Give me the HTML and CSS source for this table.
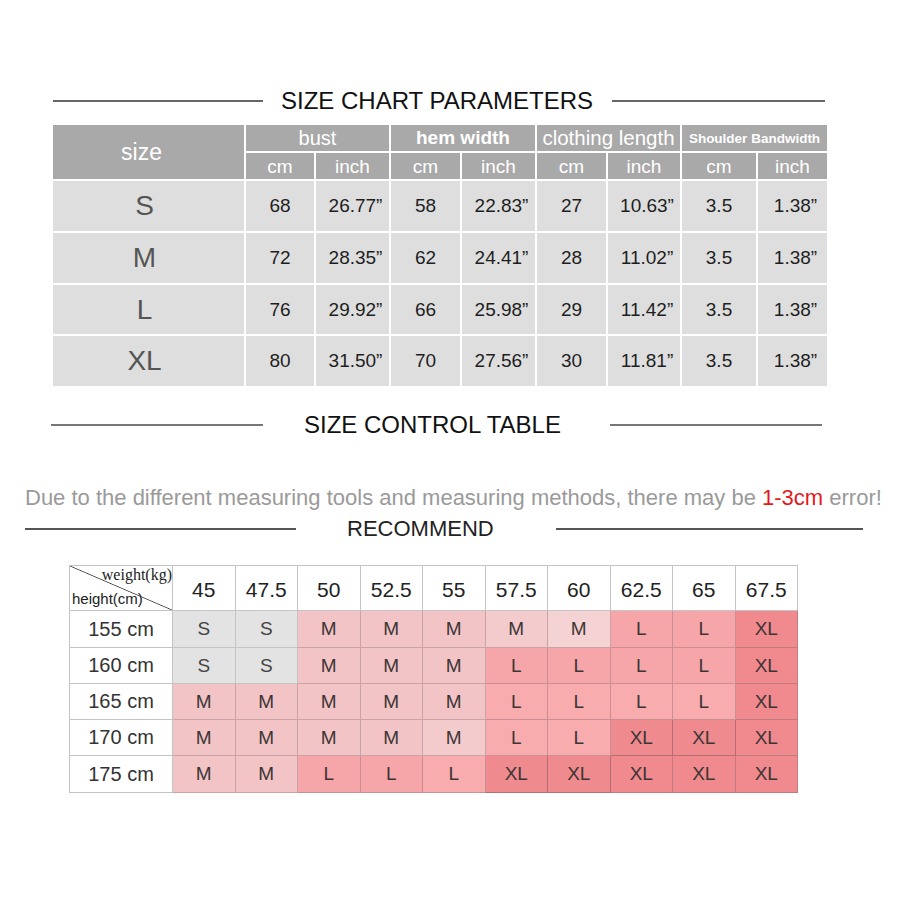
FILE: index.html
```html
<!DOCTYPE html>
<html>
<head>
<meta charset="utf-8">
<link rel="stylesheet" href="styles.css">
</head>
<body>
<div class="page">
  <div class="title t1">
    <span class="rule r1a"></span>
    <h1 class="title-text">SIZE CHART PARAMETERS</h1>
    <span class="rule r1b"></span>
  </div>

  <div class="chart">
    <div class="hd size-hd">size</div>
    <div class="hd grp">bust</div>
    <div class="hd grp bold">hem width</div>
    <div class="hd grp big">clothing length</div>
    <div class="hd grp small">Shoulder Bandwidth</div>
    <div class="hd unit">cm</div><div class="hd unit">inch</div>
    <div class="hd unit">cm</div><div class="hd unit">inch</div>
    <div class="hd unit">cm</div><div class="hd unit">inch</div>
    <div class="hd unit">cm</div><div class="hd unit">inch</div>

    <div class="bd sz">S</div><div class="bd">68</div><div class="bd in">26.77”</div><div class="bd">58</div><div class="bd in">22.83”</div><div class="bd">27</div><div class="bd in">10.63”</div><div class="bd">3.5</div><div class="bd in">1.38”</div>
    <div class="bd sz">M</div><div class="bd">72</div><div class="bd in">28.35”</div><div class="bd">62</div><div class="bd in">24.41”</div><div class="bd">28</div><div class="bd in">11.02”</div><div class="bd">3.5</div><div class="bd in">1.38”</div>
    <div class="bd sz">L</div><div class="bd">76</div><div class="bd in">29.92”</div><div class="bd">66</div><div class="bd in">25.98”</div><div class="bd">29</div><div class="bd in">11.42”</div><div class="bd">3.5</div><div class="bd in">1.38”</div>
    <div class="bd sz">XL</div><div class="bd">80</div><div class="bd in">31.50”</div><div class="bd">70</div><div class="bd in">27.56”</div><div class="bd">30</div><div class="bd in">11.81”</div><div class="bd">3.5</div><div class="bd in">1.38”</div>
  </div>

  <div class="title t2">
    <span class="rule r2a"></span>
    <h2 class="title-text">SIZE CONTROL TABLE</h2>
    <span class="rule r2b"></span>
  </div>

  <p class="notice">Due to the different measuring tools and measuring methods, there may be <span class="red">1-3cm</span> error!</p>

  <div class="title t3">
    <span class="rule r3a"></span>
    <h3 class="rec-text">RECOMMEND</h3>
    <span class="rule r3b"></span>
  </div>

  <div class="grid">
    <div class="c corner"><span class="w">weight(kg)</span><span class="h">height(cm)</span></div>
    <div class="c num">45</div><div class="c num">47.5</div><div class="c num">50</div><div class="c num">52.5</div><div class="c num">55</div><div class="c num">57.5</div><div class="c num">60</div><div class="c num">62.5</div><div class="c num">65</div><div class="c num">67.5</div>

    <div class="c lab">155 cm</div>
    <div class="c s">S</div><div class="c s">S</div><div class="c m">M</div><div class="c m">M</div><div class="c m">M</div><div class="c m2">M</div><div class="c m3">M</div><div class="c l">L</div><div class="c l">L</div><div class="c xl">XL</div>

    <div class="c lab">160 cm</div>
    <div class="c s">S</div><div class="c s">S</div><div class="c m">M</div><div class="c m">M</div><div class="c m">M</div><div class="c l">L</div><div class="c l">L</div><div class="c l">L</div><div class="c l">L</div><div class="c xl">XL</div>

    <div class="c lab">165 cm</div>
    <div class="c m">M</div><div class="c m">M</div><div class="c m">M</div><div class="c m">M</div><div class="c m">M</div><div class="c l2">L</div><div class="c l2">L</div><div class="c l2">L</div><div class="c l2">L</div><div class="c xl">XL</div>

    <div class="c lab">170 cm</div>
    <div class="c m">M</div><div class="c m">M</div><div class="c m">M</div><div class="c m">M</div><div class="c m2">M</div><div class="c l2">L</div><div class="c l2">L</div><div class="c xl2">XL</div><div class="c xl2">XL</div><div class="c xl">XL</div>

    <div class="c lab">175 cm</div>
    <div class="c m">M</div><div class="c m">M</div><div class="c l">L</div><div class="c l">L</div><div class="c l2">L</div><div class="c xl2">XL</div><div class="c xl2">XL</div><div class="c xl">XL</div><div class="c xl">XL</div><div class="c xl">XL</div>
  </div>
</div>
</body>
</html>
```

FILE: styles.css
```css
* { box-sizing: border-box; }
html, body { margin: 0; padding: 0; background: #fff; }
body { font-family: "Liberation Sans", Arial, sans-serif; width: 900px; height: 900px; }
.page { padding-top: 86px; }

.title { display: flex; align-items: center; height: 30px; }
.title-text, .rec-text { margin: 0; font-weight: normal; white-space: nowrap; line-height: 30px; }
.title-text { font-size: 24px; color: #111; }
.rec-text { font-size: 22px; color: #222; }
.rule { display: block; height: 2px; background: #666; }

.t1 { padding-left: 53px; }
.r1a { width: 210px; margin-right: 18px; }
.r1b { width: 213px; margin-left: 19px; }

.t2 { padding-left: 51px; margin-top: 24px; }
.r2a { width: 212px; margin-right: 41px; background: #777; }
.r2b { width: 212px; margin-left: 49px; background: #777; }

.notice { margin: 46px 0 0 25px; height: 24px; line-height: 24px; font-size: 22px; color: #9a9a9a; white-space: nowrap; }
.red { color: #e3191c; }

.t3 { padding-left: 25px; margin-top: 7px; height: 24px; }
.t3 .rec-text { line-height: 24px; }
.r3a { width: 271px; margin-right: 51px; background: #555; }
.r3b { width: 307px; margin-left: 62px; background: #555; }

/* size chart */
.chart {
  margin: 9px 0 0 53px;
  width: 774px;
  display: grid;
  grid-template-columns: 191px 68px 73px 69px 73px 69px 72px 74px 69px;
  grid-template-rows: 26px 26px 50px 50px 49px 50px;
  gap: 2px;
  background: #fff;
}
.hd { background: #a9a9a9; color: #fff; display: flex; align-items: center; justify-content: center; font-size: 19px; white-space: nowrap; }
.size-hd { grid-row: span 2; font-size: 23px; padding-right: 14px; }
.grp { grid-column: span 2; font-size: 20px; }
.grp.bold { font-weight: bold; font-size: 19px; }
.grp.big { font-size: 20.5px; }
.grp.small { font-weight: bold; font-size: 13.5px; }
.unit { padding-top: 2px; }
.bd { background: #dedede; color: #1e1e1e; display: flex; align-items: center; justify-content: center; font-size: 19px; }
.bd.in { padding-left: 6px; }
.bd.sz { font-size: 28px; color: #555; padding-right: 8px; }

/* recommend grid */
.grid {
  margin: 24px 0 0 69px;
  width: 729px;
  display: grid;
  grid-template-columns: 103px repeat(10, 62.5px);
  grid-template-rows: 45px 37px 36px 36px 36px 37px;
  border-left: 1px solid #c4c4c4;
  border-top: 1px solid #c4c4c4;
}
.c { display: flex; align-items: center; justify-content: center; border-right: 1px solid #c4c4c4; border-bottom: 1px solid #c4c4c4; font-size: 19px; color: #3d3535; background: #fff; }
.num { font-size: 21px; color: #222; padding-top: 3px; }
.lab { font-size: 20px; color: #333; }
.corner {
  position: relative;
  background: linear-gradient(to top right, transparent calc(50% - 0.8px), #444 50%, transparent calc(50% + 0.8px));
}
.corner .w { position: absolute; right: 0; top: 0; font-family: "Liberation Serif", "Times New Roman", serif; font-size: 16px; color: #222; }
.corner .h { position: absolute; left: 2px; bottom: 3px; font-size: 15px; color: #222; }
.s { background: #e3e3e3; color: #444; }
.m { background: #f3c4c6; border-color: #c9a3a5; }
.m2 { background: #f4cbcc; border-color: #c9a3a5; }
.m3 { background: #f5d2d3; border-color: #c9a3a5; }
.l { background: #f6a5a8; border-color: #c98f92; }
.l2 { background: #f8acae; border-color: #c98f92; }
.xl { background: #f08a8e; border-color: #c27c80; }
.xl2 { background: #ef8b8f; border-color: #b66e72; }
```
